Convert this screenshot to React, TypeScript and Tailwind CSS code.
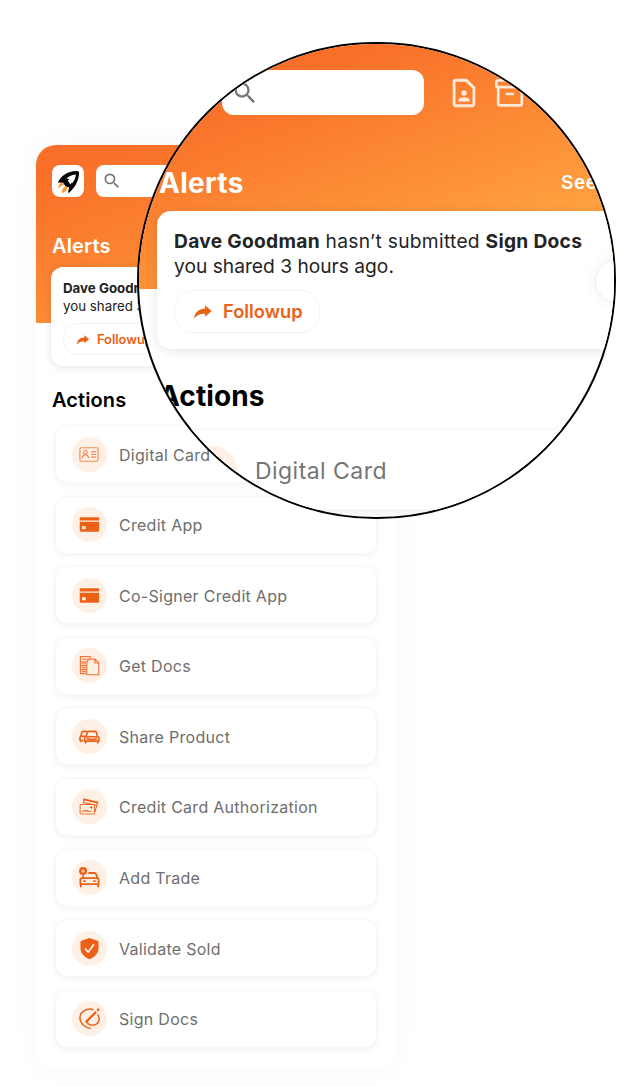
import type { ReactNode } from "react";
import { MdSearch, MdOutlineContactPage } from "react-icons/md";

const svg = (children: ReactNode) => (
  <svg
    viewBox="0 0 24 24"
    className="size-6 text-[#ec6018]"
    fill="none"
    stroke="currentColor"
    strokeLinecap="round"
    strokeLinejoin="round"
  >
    {children}
  </svg>
);

const idCard = svg(
  <g stroke="#f28a5c" strokeWidth="1.200">
    <rect x="2" y="5" width="19" height="14" rx="1.600" />
    <circle cx="7.700" cy="9.700" r="1.900" />
    <path d="M4.300 15.500c.4-2 1.700-3.300 3.400-3.300s3 1.300 3.400 3.300M14 9.200h4.500M14 12h4.500M14 14.800h4.500" />
  </g>
);

const creditCard = svg(
  <g fill="currentColor" stroke="none">
    <path d="M3 4.500h18c.6 0 1.100.5 1.100 1.100v2.200H1.800V5.600c0-.6.500-1.100 1.200-1.100z" />
    <path
      fillRule="evenodd"
      d="M1.800 9.200h20.300v9.100c0 .7-.4 1.200-1.100 1.200H3c-.7 0-1.200-.5-1.200-1.200V9.200zm2.400 4.600V17h3.800v-3.200H4.200z"
    />
  </g>
);

const docs = svg(
  <g strokeWidth="1.200" stroke="#f0753a">
    <path d="M8.500 20.500H2.500V2.800h10.200v1.700M2.500 8.200h6M2.500 12.200h6M2.500 16.300h6M4.300 5.500h6M4.500 10.200h3M4.500 14.200h3M4.500 18.400h3" />
    <path d="M9.200 8.500 11.300 5.300h6.700l3.700 3.700v12.700H9.200V8.500zM17.600 5.500v3.900h4" />
  </g>
);

const cars = svg(
  <g strokeWidth="1.700">
    <path d="M8.500 12 9.700 7.600c.2-.6.600-.9 1.200-.9h7c.6 0 1 .3 1.200.9l1.300 4.400M8.200 12.300h12.400c.8 0 1.300.5 1.300 1.400v3.100H6.900v-3.100c0-.9.500-1.400 1.300-1.400z" />
    <path d="M8.600 6.700H5.300c-.6 0-.9.300-1.100.9L2.900 11.700c-.5.400-.8.900-.8 1.500v3h3M4 11.700h3M8 17v1.700M20.700 17v1.700M3.100 16v1.500M9.500 14.500h1.200M18 14.500h1.200M12 15h5" />
  </g>
);

const cardsStack = svg(
  <g strokeWidth="1.050">
    <rect x="2.200" y="10" width="15" height="9.800" rx=".8" stroke="#f0753a" />
    <path d="M6.300 4.600 20.400 8" strokeWidth="2" />
    <path d="M5.500 8.300l.8-3.500 14.200 3.100-2.800 9.500M5.500 7.800l13.700 2.800M4.600 17h1.600l1-1.400 1.200 1.600 1.400-1.200.9 1h3M12.700 13h2M14 12v2" />
  </g>
);

const carPlus = svg(
  <g strokeWidth="1.900">
    <path d="M11.500 7.300h5.900c.7 0 1.100.3 1.400 1l1.600 4M5.500 10.500l-.8 2M4.200 12.600h15.600c1.100 0 1.700.6 1.700 1.700v4.700H2.500v-4.700c0-1.100.600-1.700 1.700-1.700zM3 19v2.500M21 19v2.500" />
    <path d="M6.200 15.700h1.200M16.600 15.700h1.200" />
    <circle cx="5.300" cy="5.300" r="4.200" fill="currentColor" stroke="none" />
    <path d="M5.300 3.600v3.400M3.600 5.300h3.400" stroke="#fef0e4" strokeWidth=".9" />
  </g>
);

const shield = svg(
  <>
    <path
      d="m12 1 8.500 2.900c.6.200.9.600.9 1.200v6.300c0 6-4.300 9.500-9.400 11.800-5.100-2.300-9.400-5.800-9.400-11.800V5.100c0-.6.300-1 .9-1.200z"
      fill="currentColor"
      stroke="none"
    />
    <path d="m7.700 12.500 3 3.200 5.600-7.500" stroke="#fef0e4" strokeWidth="1.800" />
  </>
);

const sign = svg(
  <g strokeWidth="1.500">
    <path d="M15.700 2.700C9.200.6 2 4.900 2 11.300c0 5.500 5 10.400 11 11" />
    <path d="M20.800 8.200c3.200 5.900-.4 10.700-5.400 10.700-2.600 0-4.900-1-6-2.600" />
    <path d="m8.700 15.300 9.500-9.600" strokeWidth="2.400" />
    <path d="m21 3 .1-.1" strokeWidth="2.800" />
  </g>
);

const actions: { label: string; icon: ReactNode }[] = [
  { label: "Digital Card", icon: idCard },
  { label: "Credit App", icon: creditCard },
  { label: "Co-Signer Credit App", icon: creditCard },
  { label: "Get Docs", icon: docs },
  { label: "Share Product", icon: cars },
  { label: "Credit Card Authorization", icon: cardsStack },
  { label: "Add Trade", icon: carPlus },
  { label: "Validate Sold", icon: shield },
  { label: "Sign Docs", icon: sign },
];

function RocketLogo() {
  return (
    <svg viewBox="0 0 32 32" className="size-8">
      <path
        fillRule="evenodd"
        fill="#050505"
        d="M5.800 17.600C9 11 15 6.200 24.500 6c2 0 2.800.7 2.600 2.600-.7 8.300-4.300 14-9.700 19l-1.500.2 1.300-5.400-3.600-1-2.500-3.600-5.300-.2zM13.500 14.500 18.600 20c2.800-3 5-6.300 5.300-10.600-4.400.3-7.700 1.900-10.400 5.100z"
      />
      <path d="m14.500 13.200 4.700 1.800 1 3.700-2.800 3.600-5.600-5.500z" fill="#050505" />
      <path d="m15.800 15.500 2.800-2.300 3.500-2.200-1.600 5.300-2 3.300z" fill="#fff" />
      <path d="M6.600 23.800c-.6-3 1-5.200 3.800-6.300l2 1.800c-2.200.7-4 2-5.800 4.500z" fill="#f98a25" />
      <path d="M9.700 28c0-3.400 1.700-6 4.500-7l1.400 1.700c-.3 2.600-2.400 4.500-5.900 5.300z" fill="#fb9a35" />
    </svg>
  );
}

function FollowupArrow({ className }: { className: string }) {
  return (
    <svg viewBox="0 0 20 14" className={className} fill="currentColor">
      <path d="M12 .2 18.700 6 12 11.800V8.700C7 8.500 3.800 9.900 1.200 13.700 1.600 7.500 5.500 3.900 12 3.500z" />
    </svg>
  );
}

function ArchiveIcon() {
  return (
    <svg viewBox="0 0 30 30" className="h-[30px] w-[30px]" fill="none" stroke="#ffe9d8" strokeWidth="2.700" strokeLinejoin="round">
      <rect x="2.400" y="2.300" width="26.200" height="6.900" rx="1.500" />
      <path d="M4.200 9v16.800c0 1 .6 1.600 1.600 1.600h20.400c1 0 1.600-.6 1.600-1.600V9M11.500 16h8.500" />
    </svg>
  );
}

function Phone() {
  return (
    <main className="ml-9 h-[925px] w-[360px] overflow-hidden rounded-[20px] bg-white shadow-[0_0_28px_rgba(0,0,0,0.035)]">
      <header className="h-[178px] bg-[linear-gradient(160deg,#f96f29_10%,#ffa53f_100%)] px-4 pt-5">
        <div className="flex gap-3">
          <div className="size-8 shrink-0 rounded-lg bg-white">
            <RocketLogo />
          </div>
          <div className="flex h-8 w-[160px] items-center rounded-lg bg-white pl-1.5">
            <MdSearch className="size-5 text-[#757575]" />
          </div>
        </div>
        <h2 className="mt-[37px] text-[20px] leading-6 font-semibold tracking-[0.15px] text-white">Alerts</h2>
      </header>
      <section className="-mt-14 ml-[15px] h-[99px] w-[330px] rounded-xl bg-white px-3 pt-3 text-[#212121] shadow-[0_1px_8px_rgba(0,0,0,0.12)]">
        <p className="text-[13.300px] leading-[18px] whitespace-nowrap">
          <b className="font-bold">Dave Goodman</b>
          <br />
          you shared 3 hours ago.
        </p>
        <button className="mt-2 flex h-8 w-[106px] items-center rounded-[14px] border border-[#f3f3f3] pt-px pl-3 text-[12.800px] font-semibold text-[#ec6018]">
          <FollowupArrow className="mr-[7px] h-[10px] w-[14px]" />
          Followup
        </button>
      </section>
      <h2 className="mt-[22px] ml-4 text-[20px] leading-6 font-semibold tracking-[0.1px] text-black">Actions</h2>
      <ul className="mt-[13px] ml-[19px] flex flex-col gap-[12.600px]">
        {actions.map(({ label, icon }) => (
          <li
            key={label}
            className="flex h-[58px] w-[322px] items-center gap-3 rounded-xl border border-[#f7f7f7] bg-white pl-4 shadow-[0_2px_6px_rgba(0,0,0,0.055)]"
          >
            <span className="flex size-[35px] items-center justify-center rounded-full bg-[#fef0e4]">
              <span className="flex [&>svg]:size-[23px]">{icon}</span>
            </span>
            <span className="pt-px text-[16px] tracking-[0.280px] text-[#6e6e6e]">{label}</span>
          </li>
        ))}
      </ul>
    </main>
  );
}

function Magnifier() {
  return (
    <div className="absolute top-[42px] left-[137px] h-[477px] w-[479px] overflow-hidden rounded-full border-2 border-black bg-white">
      <header className="h-[245px] bg-[linear-gradient(160deg,#f96b27_15%,#ffa742_85%)] pt-[26px]">
        <div className="flex items-center">
          <div className="ml-[83px] flex h-[45px] w-[202px] shrink-0 items-center rounded-xl bg-white pl-[9px]">
            <MdSearch className="size-[28px] text-[#757575]" />
          </div>
          <MdOutlineContactPage className="ml-[23px] size-[34px] text-[#ffe9d8]" />
          <div className="ml-[13px]">
            <ArchiveIcon />
          </div>
        </div>
        <div className="mt-[50px] flex h-9 items-center text-white">
          <h2 className="ml-[20px] w-[402px] text-[28px] font-bold tracking-[0.300px]">Alerts</h2>
          <span className="text-[19px] font-semibold tracking-[0.6px] whitespace-nowrap">See</span>
        </div>
      </header>
      <section className="relative -mt-[78px] ml-[18px] h-[138px] w-[475px] rounded-[14px] bg-white px-[17px] pt-[18px] text-[#242424] shadow-[0_2px_12px_rgba(0,0,0,0.1)]">
        <p className="text-[19.200px] leading-[25px] whitespace-nowrap">
          <span className="tracking-[0.290px]">
            <b className="font-bold">Dave Goodman</b> hasn’t submitted <b className="font-bold">Sign Docs</b>
          </span>
          <br />
          you shared 3 hours ago.
        </p>
        <button className="mt-[11px] flex h-[43px] w-[146px] items-center rounded-[19px] border border-[#f3f3f3] pt-px pl-[18px] text-[18.300px] font-semibold text-[#ec6018]">
          <FollowupArrow className="mr-[10px] h-[14px] w-[20px]" />
          Followup
        </button>
        <div className="absolute top-[48px] left-[438px] flex size-[44px] items-center rounded-full border border-[#ededed] bg-white pl-[9px] shadow-[0_0_16px_rgba(0,0,0,0.06)]">
          <svg viewBox="0 0 16 16" className="size-4" fill="none" stroke="#333" strokeWidth="1.500">
            <path d="m9.500 1 6 7-6 7" />
          </svg>
        </div>
      </section>
      <h2 className="mt-[29px] ml-[20px] text-[28px] leading-9 font-bold tracking-[0.100px] text-black">Actions</h2>
      <div className="mt-[15px] ml-[25px] flex h-[81px] w-[470px] items-center gap-[18px] rounded-2xl border border-[#f5f5f5] bg-white pt-0.5 pl-[23px] shadow-[0_3px_9px_rgba(0,0,0,0.07)]">
        <span className="size-[49px] rounded-full bg-[#fef0e4]" />
        <span className="pt-px text-[23px] tracking-[0.450px] text-[#757575]">Digital Card</span>
      </div>
    </div>
  );
}

export default function App() {
  return (
    <div className="relative h-[1087px] w-[632px] overflow-hidden bg-white pt-[145px] font-['Inter',sans-serif]">
      <Phone />
      <Magnifier />
    </div>
  );
}
